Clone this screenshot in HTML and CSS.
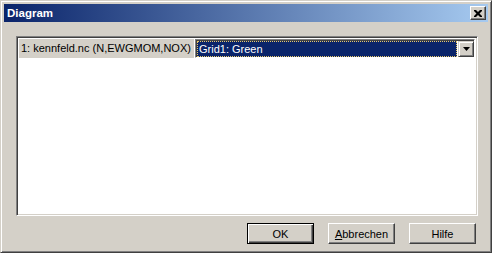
FILE: index.html
```html
<!DOCTYPE html>
<html lang="de">
<head>
  <meta charset="UTF-8" />
  <title>Diagram</title>
  <link rel="stylesheet" href="styles.css">
</head>
<body>
  <div class="window">
    <div class="titlebar">
      <span class="title">Diagram</span>
      <button class="close" title="Schließen">
        <svg width="8" height="7" viewBox="0 0 8 7"><path d="M0 0h2l2 2 2-2h2v1l-2.5 2.5L8 6v1H6L4 5 2 7H0V6l2.5-2.5L0 1z" fill="#000"/></svg>
      </button>
    </div>

    <div class="panel">
      <div class="row">
        <div class="cell">1: kennfeld.nc (N,EWGMOM,NOX)</div>
        <div class="combo">
          <div class="selected">Grid1: Green</div>
          <div class="drop">
            <svg width="7" height="4" viewBox="0 0 7 4"><path d="M0 0h7L3.5 4z" fill="#000"/></svg>
          </div>
        </div>
      </div>
    </div>

    <div class="actions">
      <button class="btn default">OK</button>
      <button class="btn"><u>A</u>bbrechen</button>
      <button class="btn">Hilfe</button>
    </div>
  </div>
</body>
</html>
```

FILE: styles.css
```css
body { margin: 0; font-family: "Liberation Sans", Arial, sans-serif; font-size: 11px; background: #d4d0c8; }
.window { width: 492px; height: 253px; box-sizing: border-box; background: #d4d0c8; border: 1px solid; border-color: #d4d0c8 #404040 #404040 #d4d0c8; box-shadow: inset 1px 1px #fff, inset -1px -1px #808080; padding: 3px; }
.titlebar { height: 18px; display: flex; align-items: center; justify-content: space-between; background: linear-gradient(to right, #0a246a, #a6caf0); padding: 0 2px 0 2px; }
.title { color: #fff; font-weight: bold; font-size: 11.5px; padding-left: 1px; }
.close { width: 16px; height: 14px; padding: 0; margin: 0; display: flex; align-items: center; justify-content: center; background: #d4d0c8; border: 1px solid; border-color: #fff #404040 #404040 #fff; box-shadow: inset -1px -1px #808080; }

.panel { width: 462px; height: 180px; box-sizing: border-box; margin: 14px 0 0 12px; background: #fff; border: 1px solid; border-color: #808080 #fff #fff #808080; box-shadow: inset 1px 1px #404040, inset -1px -1px #d4d0c8; padding: 2px; }
.row { display: flex; height: 19px; }
.cell { width: 173px; background: #d4d0c8; padding-left: 2px; line-height: 18px; white-space: nowrap; overflow: hidden; color: #000; }
.combo { flex: 1; display: flex; background: #fff; border: 1px solid; border-color: #808080 #fff #fff #808080; box-shadow: inset 1px 1px #404040; padding: 1px 0 0 1px; margin-left: 1px; }
.selected { flex: 1; background: #0a246a; color: #fff; border: 1px dotted #e8c96a; line-height: 14px; padding-left: 1px; }
.drop { width: 16px; box-sizing: border-box; display: flex; align-items: center; justify-content: center; background: #d4d0c8; border: 1px solid; border-color: #d4d0c8 #404040 #404040 #d4d0c8; box-shadow: inset 1px 1px #fff, inset -1px -1px #808080; margin-left: 1px; }

.actions { display: flex; justify-content: flex-end; gap: 14px; margin: 7px 12px 0 0; }
.btn { width: 67px; height: 21px; padding: 0; font-family: inherit; font-size: 11px; color: #000; background: #d4d0c8; border: 1px solid; border-color: #fff #404040 #404040 #fff; box-shadow: inset -1px -1px #808080; }
.btn.default { border: 1px solid #000; box-shadow: inset 1px 1px #fff, inset -1px -1px #404040, inset -2px -2px #808080; }
```
